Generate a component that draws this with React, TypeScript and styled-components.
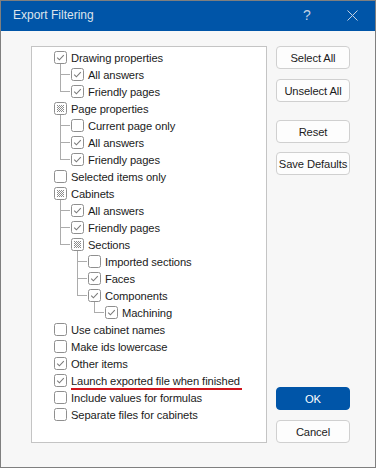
import styled, { createGlobalStyle } from "styled-components";

const GlobalStyle = createGlobalStyle`
  html, body {
    margin: 0;
    padding: 0;
    background: #ffffff;
  }
  * {
    box-sizing: border-box;
  }
`;

type CheckState = "on" | "off" | "mixed";

interface TreeItem {
  label: string;
  state: CheckState;
  marked?: boolean;
  children?: TreeItem[];
}

const items: TreeItem[] = [
  {
    label: "Drawing properties",
    state: "on",
    children: [
      { label: "All answers", state: "on" },
      { label: "Friendly pages", state: "on" },
    ],
  },
  {
    label: "Page properties",
    state: "mixed",
    children: [
      { label: "Current page only", state: "off" },
      { label: "All answers", state: "on" },
      { label: "Friendly pages", state: "on" },
    ],
  },
  { label: "Selected items only", state: "off" },
  {
    label: "Cabinets",
    state: "mixed",
    children: [
      { label: "All answers", state: "on" },
      { label: "Friendly pages", state: "on" },
      {
        label: "Sections",
        state: "mixed",
        children: [
          { label: "Imported sections", state: "off" },
          { label: "Faces", state: "on" },
          {
            label: "Components",
            state: "on",
            children: [{ label: "Machining", state: "on" }],
          },
        ],
      },
    ],
  },
  { label: "Use cabinet names", state: "off" },
  { label: "Make ids lowercase", state: "off" },
  { label: "Other items", state: "on" },
  { label: "Launch exported file when finished", state: "on", marked: true },
  { label: "Include values for formulas", state: "off" },
  { label: "Separate files for cabinets", state: "off" },
];

const Window = styled.div`
  width: 376px;
  height: 468px;
  border: 1px solid #7f7f7f;
  background: #f7f7f7;
  display: flex;
  flex-direction: column;
  font-family: "Liberation Sans", Arial, sans-serif;
  font-size: 11.2px;
  letter-spacing: -0.1px;
  color: #1b1b1b;
`;

const TitleBar = styled.div`
  height: 30px;
  background: #0055a8;
  display: flex;
  align-items: center;
  padding: 0 0 2px 12px;
  color: #dde4ec;
  font-size: 12px;
  letter-spacing: 0;
`;

const Title = styled.div`
  flex: 1;
`;

const TitleButton = styled.div<{ $w: number }>`
  width: ${(p) => p.$w}px;
  height: 29px;
  display: flex;
  align-items: center;
  justify-content: center;
  color: #c3d1e3;
`;

const Body = styled.div`
  flex: 1;
  display: flex;
  padding: 15px 0 24px 30px;
  gap: 9px;
`;

const ListBox = styled.div`
  width: 236px;
  height: 397px;
  background: #ffffff;
  border: 1px solid #c4c4c4;
  padding: 2px 0 0 22px;
`;

const ChildList = styled.div`
  padding-left: 17px;
`;

const Node = styled.div<{ $child: boolean; $last: boolean }>`
  position: relative;

  &::before {
    content: "";
    display: ${(p) => (p.$child ? "block" : "none")};
    position: absolute;
    left: -11px;
    top: -2px;
    width: 1px;
    height: ${(p) => (p.$last ? "11px" : "calc(100% + 2px)")};
    background: #acacac;
  }

  &::after {
    content: "";
    display: ${(p) => (p.$child ? "block" : "none")};
    position: absolute;
    left: -11px;
    top: 8px;
    width: 10px;
    height: 1px;
    background: #acacac;
  }
`;

const Row = styled.div`
  height: 17px;
  display: flex;
  align-items: center;
  gap: 4px;
  white-space: nowrap;
`;

const Label = styled.span<{ $marked?: boolean }>`
  line-height: 14px;
  margin-top: ${(p) => (p.$marked ? "3px" : "0")};
  padding-right: ${(p) => (p.$marked ? "2px" : "0")};
  border-bottom: ${(p) => (p.$marked ? "2px solid #d0141c" : "none")};
`;

const ButtonColumn = styled.div`
  width: 74px;
  display: flex;
  flex-direction: column;
`;

const Button = styled.div<{ $gap?: number; $primary?: boolean }>`
  height: 23px;
  margin-top: ${(p) => p.$gap ?? 0}px;
  border: 1px solid ${(p) => (p.$primary ? "#0055a8" : "#d0d0d0")};
  border-radius: 4px;
  background: ${(p) => (p.$primary ? "#0055a8" : "#fdfdfd")};
  color: ${(p) => (p.$primary ? "#ffffff" : "#1b1b1b")};
  display: flex;
  align-items: center;
  justify-content: center;
  white-space: nowrap;
`;

const Spacer = styled.div`
  flex: 1;
`;

function CheckBox({ state }: { state: CheckState }) {
  return (
    <svg width="13" height="13" viewBox="0 0 13 13" style={{ flex: "none" }}>
      <defs>
        <pattern id="dots" width="2" height="2" patternUnits="userSpaceOnUse">
          <rect width="2" height="2" fill="#ffffff" />
          <rect width="1" height="1" fill="#8c8c8c" />
          <rect x="1" y="1" width="1" height="1" fill="#8c8c8c" />
        </pattern>
      </defs>
      <rect
        x="0.5"
        y="0.5"
        width="12"
        height="12"
        rx="2"
        fill="#ffffff"
        stroke="#8f8f8f"
      />
      {state === "on" && (
        <path
          d="M3.2 6.6 L5.4 8.8 L9.8 4.2"
          fill="none"
          stroke="#7a7a7a"
          strokeWidth="1.1"
        />
      )}
      {state === "mixed" && (
        <rect x="3" y="3" width="7" height="7" fill="url(#dots)" />
      )}
    </svg>
  );
}

function TreeNode({
  item,
  child,
  last,
}: {
  item: TreeItem;
  child: boolean;
  last: boolean;
}) {
  return (
    <Node $child={child} $last={last}>
      <Row>
        <CheckBox state={item.state} />
        <Label $marked={item.marked}>{item.label}</Label>
      </Row>
      {item.children && (
        <ChildList>
          {item.children.map((c, i) => (
            <TreeNode
              key={c.label + i}
              item={c}
              child
              last={i === item.children!.length - 1}
            />
          ))}
        </ChildList>
      )}
    </Node>
  );
}

export default function App() {
  return (
    <>
      <GlobalStyle />
      <Window>
        <TitleBar>
          <Title>Export Filtering</Title>
          <TitleButton $w={44}>
            <span style={{ fontSize: 14 }}>?</span>
          </TitleButton>
          <TitleButton $w={46}>
            <svg width="11" height="11" viewBox="0 0 11 11">
              <path d="M0.5 0.5 L10.5 10.5 M10.5 0.5 L0.5 10.5" stroke="#c3d1e3" strokeWidth="1" />
            </svg>
          </TitleButton>
        </TitleBar>
        <Body>
          <ListBox>
            {items.map((it, i) => (
              <TreeNode key={it.label + i} item={it} child={false} last={false} />
            ))}
          </ListBox>
          <ButtonColumn>
            <Button>Select All</Button>
            <Button $gap={10}>Unselect All</Button>
            <Button $gap={18}>Reset</Button>
            <Button $gap={9}>Save Defaults</Button>
            <Spacer />
            <Button $primary>OK</Button>
            <Button $gap={10}>Cancel</Button>
          </ButtonColumn>
        </Body>
      </Window>
    </>
  );
}
